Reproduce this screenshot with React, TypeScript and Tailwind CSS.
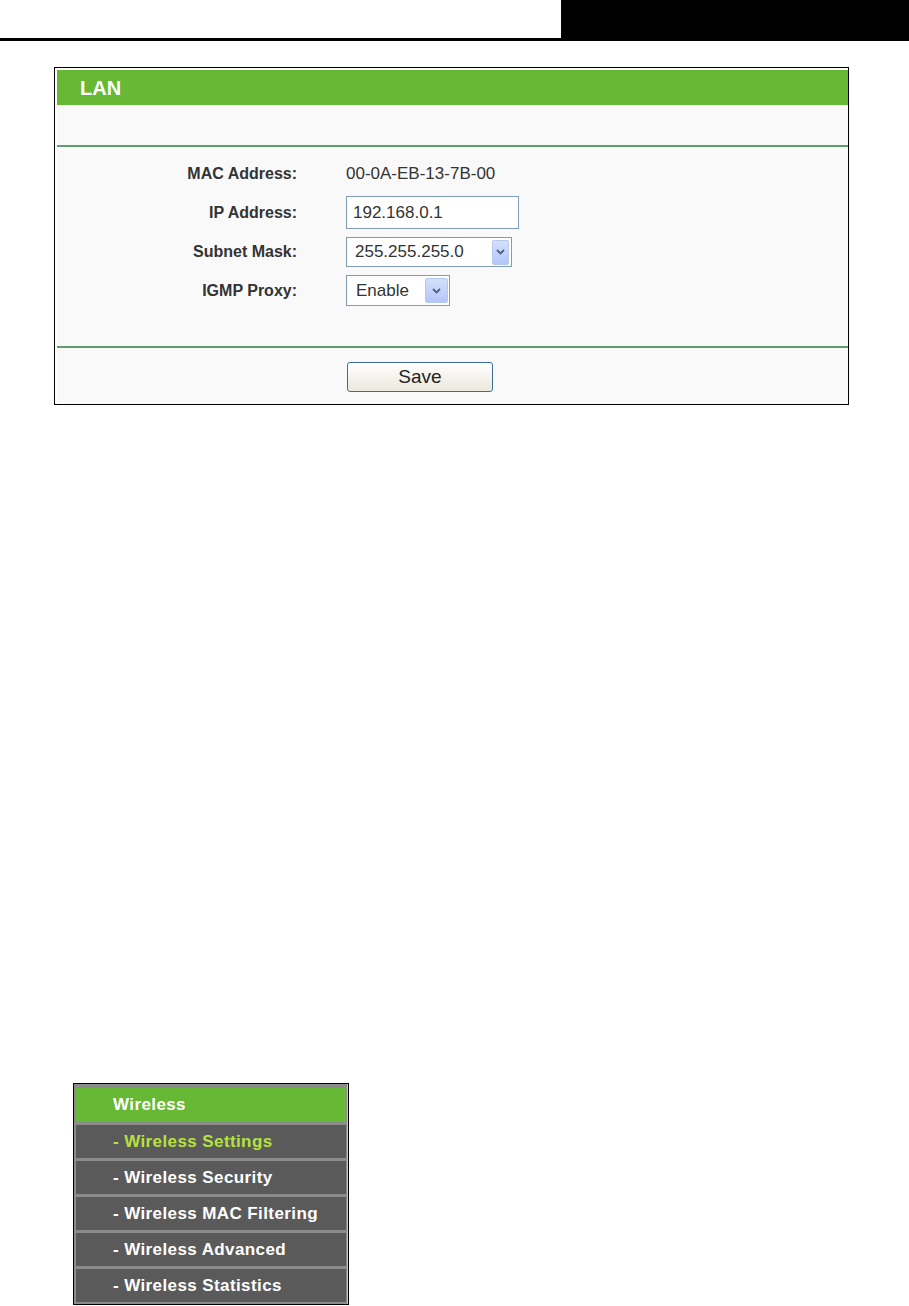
function Arrow({ className }: { className: string }) {
  return (
    <span
      className={`flex items-center justify-center rounded-[2px] border border-[#b7c8f0] bg-gradient-to-b from-[#d3e0fd] to-[#b3c6f6] ${className}`}
    >
      <svg width="9" height="6" viewBox="0 0 9 6">
        <path d="M1 1 L4.5 4.5 L8 1" fill="none" stroke="#4d6185" strokeWidth="1.8" />
      </svg>
    </span>
  )
}

const menuItems = [
  { label: "- Wireless Settings", active: true },
  { label: "- Wireless Security", active: false },
  { label: "- Wireless MAC Filtering", active: false },
  { label: "- Wireless Advanced", active: false },
  { label: "- Wireless Statistics", active: false },
]

export default function App() {
  return (
    <div className="min-h-[1306px] bg-white font-['Liberation_Sans',Arial,sans-serif]">
      {/* Page header bar */}
      <div className="flex">
        <div className="h-[41px] flex-1 border-b-[3px] border-black" />
        <div className="h-[41px] w-[348px] bg-black" />
      </div>

      {/* LAN panel */}
      <div className="ml-[54px] mt-[26px] w-[795px] border border-black bg-white pl-[2px] pt-[2px]">
        <div className="flex h-[35px] items-center bg-[#67b834] pl-[23px] text-[20px] font-bold text-white">
          LAN
        </div>
        <div className="h-[40px] bg-[#f9f9f9]" />
        <div className="h-[2px] bg-[#5f9a70]" />

        <div className="flex h-[199px] flex-col gap-[8px] bg-[#f9f9f9] pt-[13px] text-[#333]">
          <div className="flex h-[28px] items-center">
            <div className="w-[240px] text-right text-[16px] font-bold">MAC Address:</div>
            <div className="ml-[49px] text-[17px]">00-0A-EB-13-7B-00</div>
          </div>
          <div className="flex h-[33px] items-center">
            <div className="w-[240px] text-right text-[16px] font-bold">IP Address:</div>
            <div className="ml-[49px] flex h-[33px] w-[173px] items-center border border-[#7f9db9] bg-white px-[6px] text-[17px]">
              192.168.0.1
            </div>
          </div>
          <div className="flex h-[30px] items-center">
            <div className="w-[240px] text-right text-[16px] font-bold">Subnet Mask:</div>
            <div className="ml-[49px] flex h-[30px] w-[166px] items-center justify-between border border-[#7f9db9] bg-white pl-[8px] pr-[2px] text-[17px]">
              <span>255.255.255.0</span>
              <Arrow className="h-[25px] w-[17px]" />
            </div>
          </div>
          <div className="flex h-[31px] items-center">
            <div className="w-[240px] text-right text-[16px] font-bold">IGMP Proxy:</div>
            <div className="ml-[49px] flex h-[31px] w-[104px] items-center justify-between border border-[#7f9db9] bg-white pl-[9px] pr-[1px] text-[17px]">
              <span>Enable</span>
              <Arrow className="h-[25px] w-[23px]" />
            </div>
          </div>
        </div>

        <div className="h-[2px] bg-[#5f9a70]" />
        <div className="h-[56px] bg-[#f9f9f9] pt-[14px]">
          <button className="ml-[290px] flex h-[30px] w-[146px] items-center justify-center rounded-[3px] border border-[#3c6b9e] bg-gradient-to-b from-white to-[#ebe8dc] text-[19px] text-[#222]">
            Save
          </button>
        </div>
      </div>

      {/* Wireless menu */}
      <div className="ml-[73px] mt-[678px] w-[276px] border border-black">
        <div className="flex flex-col gap-[3px] border-r border-[#c9c5b2] bg-[#8c8c8c] pb-[2px] pl-[2px] pr-[1px] pt-[4px] text-[17px] font-bold tracking-[0.4px]">
          <div className="flex h-[34px] items-center bg-[#67b834] pl-[37px] text-white">Wireless</div>
          {menuItems.map((item) => (
            <div
              key={item.label}
              className={`flex h-[33px] items-center bg-[#5a5a5a] pl-[37px] ${
                item.active ? "text-[#b5e23c]" : "text-white"
              }`}
            >
              {item.label}
            </div>
          ))}
        </div>
      </div>
    </div>
  )
}
